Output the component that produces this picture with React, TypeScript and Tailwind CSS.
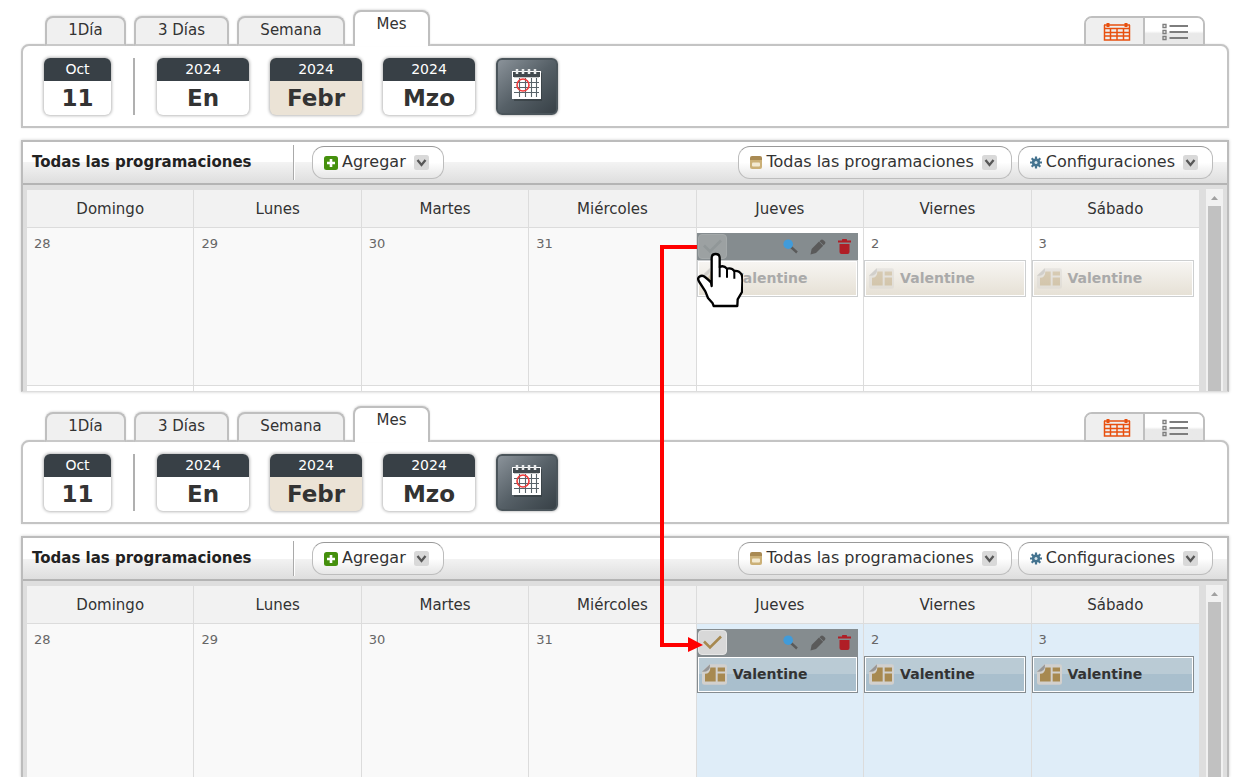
import React, { useState } from 'react';
import clsx from 'clsx';

const tabs = [
  { label: '1Día', width: 'w-[81px]' },
  { label: '3 Días', width: 'w-[95px]' },
  { label: 'Semana', width: 'w-[108px]' },
  { label: 'Mes', width: 'w-[77px]' },
];

const months = [
  { year: '2024', month: 'En' },
  { year: '2024', month: 'Febr', current: true },
  { year: '2024', month: 'Mzo' },
];

const weekDays = ['Domingo', 'Lunes', 'Martes', 'Miércoles', 'Jueves', 'Viernes', 'Sábado'];

interface Day {
  number: string;
  otherMonth?: boolean;
  active?: boolean;
  event?: string;
}

const week: Day[] = [
  { number: '28', otherMonth: true },
  { number: '29', otherMonth: true },
  { number: '30', otherMonth: true },
  { number: '31', otherMonth: true },
  { number: '1', active: true, event: 'Valentine' },
  { number: '2', event: 'Valentine' },
  { number: '3', event: 'Valentine' },
];

/* Icons */

function CalendarIcon() {
  return (
    <svg width="28" height="20" viewBox="0 0 28 20" fill="none" stroke="#e8500f" aria-hidden="true">
      <path d="M1.500 3v15h25V3M1 3h26M1 6.500h26M1 10.500h26M1 14h26M1 18h26M7.500 6v12M14 6v12M20.500 6v12" strokeWidth="1.500" />
      <path d="M5 1v4M23 1v4" strokeWidth="3" />
    </svg>
  );
}

function ListIcon() {
  return (
    <svg width="27" height="18" viewBox="0 0 27 18" fill="none" stroke="#7d7d7d" aria-hidden="true">
      <path d="M1 1.500h3v3H1zM1 7.500h3v3H1zM1 13.500h3v3H1z" strokeWidth="1.300" />
      <path d="M7.500 3H26M7.500 9H26M7.500 15H26" strokeWidth="2" />
    </svg>
  );
}

function MonthPickerIcon() {
  return (
    <svg width="32" height="34" viewBox="0 0 32 34" aria-hidden="true">
      <path d="M3 5h28v28H3z" fill="#30383c" opacity=".6" />
      <path d="M1 3h29v28H1z" fill="#fff" />
      <path d="M2 4h27v5H2z" fill="#41494e" />
      <path d="M3 9h25v1H3z" fill="#c9cccd" />
      <path d="M3 14.500h25M3 19.500h25M3 24.500h25M8.500 10v19M14.500 10v19M20.500 10v19M25.500 10v19" stroke="#59646a" strokeWidth="1.100" />
      <path d="M6 1v5M12 1v5M18 1v5M24 1v5" stroke="#e9ebec" strokeWidth="2.500" />
      <circle cx="12" cy="17" r="6" fill="none" stroke="#f13a3a" strokeWidth="1.600" />
    </svg>
  );
}

function PlusIcon() {
  return (
    <svg width="14" height="14" viewBox="0 0 14 14" aria-hidden="true">
      <rect width="14" height="14" rx="2.500" fill="#45900d" />
      <path d="M7 3v8M3 7h8" stroke="#fff" strokeWidth="2.600" />
    </svg>
  );
}

function BoxIcon() {
  return (
    <svg width="12" height="13" viewBox="0 0 12 13" aria-hidden="true">
      <path d="M0 3V2q0-2 2-2h8q2 0 2 2v2H0z" fill="#a98a53" />
      <path d="M0 4h12v7q0 2-2 2H2q-2 0-2-2z" fill="#cbb077" />
      <rect x="2" y="6.500" width="8" height="4" rx="1" fill="#f3ead2" />
    </svg>
  );
}

function GearIcon() {
  return (
    <svg width="12" height="13" viewBox="0 0 12 12" fill="none" stroke="#44738f" aria-hidden="true">
      <path d="M6 0v12M0 6h12M1.700 1.700l8.600 8.600M10.300 1.700l-8.600 8.600" strokeWidth="2.200" />
      <circle cx="6" cy="6" r="2.800" strokeWidth="2.600" />
      <circle cx="6" cy="6" r="1.500" fill="#d6e3ea" stroke="none" />
    </svg>
  );
}

function ChevronBox() {
  return (
    <svg width="15" height="15" viewBox="0 0 15 15" aria-hidden="true">
      <rect width="15" height="15" rx="2.500" fill="#d9d9d9" />
      <path d="M3.500 5l4 5 4-5" fill="none" stroke="#585858" strokeWidth="2.300" />
    </svg>
  );
}

function SearchIcon() {
  return (
    <svg width="15" height="15" viewBox="0 0 15 15" aria-hidden="true">
      <path d="M8 8l6 5.500" stroke="#5a5a5a" strokeWidth="2.400" />
      <circle cx="5.200" cy="5.200" r="4.800" fill="#419bd9" />
    </svg>
  );
}

function PencilIcon() {
  return (
    <svg width="16" height="16" viewBox="0 0 16 16" fill="#5a5a5a" aria-hidden="true">
      <path d="M.5 15.500L1.600 10 9 2.600l4.200 4.200L6 14z" />
      <path d="M9.500 2.200l1.300-1.300q1.200-1 2.400 0l1.700 1.700q1 1.200 0 2.400l-1.300 1.300z" />
    </svg>
  );
}

function TrashIcon() {
  return (
    <svg width="13" height="15" viewBox="0 0 13 15" fill="#b01e26" aria-hidden="true">
      <path d="M0 3.500V1.500h4V.700Q4 0 4.700 0h3.600Q9 0 9 .7v.8h4v2zM1.500 5h10v8q0 2-2 2h-6q-2 0-2-2z" />
    </svg>
  );
}

function LayoutIcon() {
  return (
    <svg width="25" height="21" viewBox="0 0 75 62" className="shrink-0" aria-hidden="true">
      <path d="M22 0h46q7 0 7 7v48q0 7-7 7H7q-7 0-7-7V22z" fill="#d2d0cd" />
      <path d="M9 52V29q16 0 16-19h16v42z" fill="#a78950" />
      <path d="M47 10h22v12H47zM47 28h22v24H47z" fill="#a78950" />
      <path d="M0 23L24 0q2 24-24 23z" fill="#969696" />
    </svg>
  );
}

function HandPointer() {
  return (
    <svg width="46" height="56" viewBox="0 0 138 168" className="pointer-events-none absolute left-0 top-6 z-20" aria-hidden="true">
      <path
        d="M44 102V18q0-12 12-12t12 12v27q12-6 22 5q14-4 22 7q14-2 22 11q3 8 2 26l-1 26-13 22-1 20H50l-3-8-14-16-8-20L7 90q-7-10 0-16 9-6 17 1 10 8 18 16z"
        fill="#fff"
        stroke="#000"
        strokeWidth="7"
        strokeLinejoin="round"
      />
      <path d="M68 44v32M90 49v28M112 56v24" stroke="#000" strokeWidth="6" />
    </svg>
  );
}

/* Links the first selection box to the one in the calendar below */
function LinkArrow() {
  return (
    <svg width="44" height="410" viewBox="0 0 44 410" className="pointer-events-none absolute -left-[37px] top-4 z-10" aria-hidden="true">
      <path d="M37 3H2v398h27" fill="none" stroke="#f00" strokeWidth="4" />
      <path d="M28 393l15 8-15 7z" fill="#f00" />
    </svg>
  );
}

/* Parts */

function DateCard({ top, bottom, width, current }: { top: string; bottom: string; width: string; current?: boolean }) {
  return (
    <button
      type="button"
      className={clsx(
        'flex h-[57px] flex-col overflow-hidden rounded-md text-center text-[#333] shadow-[0_0_3px_1px_#bbb]',
        width,
        current ? 'bg-[#ebe3d6]' : 'bg-white',
      )}
    >
      <span className="block h-[25px] w-full bg-[#384046] text-sm leading-[22px] text-white">{top}</span>
      <span className="block w-full text-[23px] font-bold leading-[34px]">{bottom}</span>
    </button>
  );
}

function MenuButton({ icon, label }: { icon: React.ReactNode; label: string }) {
  return (
    <button
      type="button"
      className="flex h-[33px] items-center rounded-xl border border-[#bdbdbd] border-t-[#999] bg-linear-to-b from-white from-50% to-[#e6e6e6] pl-[11px] pr-[14px] text-base leading-5 text-[#333]"
    >
      {icon}
      <span className="ml-1 mr-2 -mt-0.5">{label}</span>
      <ChevronBox />
    </button>
  );
}

function EventCard({ name, selected }: { name: string; selected: boolean }) {
  return (
    <div
      className={clsx(
        'mr-[5px] border bg-white p-px',
        selected ? 'border-[#858c90]' : 'border-[#cdcfd0]',
      )}
    >
      <div
        className={clsx(
          'flex h-[33px] items-center gap-[6px] pl-[3px]',
          selected
            ? 'bg-linear-to-b from-[#bacbd5] from-50% to-[#a9bfcd] to-50%'
            : 'bg-linear-to-b from-[#f7f5f2] to-[#e6e1d6]',
        )}
      >
        <span className={clsx('flex', !selected && 'opacity-35')}>
          <LayoutIcon />
        </span>
        <span className={clsx('pb-0.5 text-sm font-bold leading-5', selected ? 'text-[#333]' : 'text-[#aaa]')}>{name}</span>
      </div>
    </div>
  );
}

function ActionBar({ selected, onToggle }: { selected: boolean; onToggle: () => void }) {
  return (
    <div className="mr-[5px] flex h-[27px] items-center bg-[#858c8f] pl-px pr-[7px]">
      <button
        type="button"
        aria-label="Seleccionar"
        aria-pressed={selected}
        onClick={onToggle}
        className={clsx(
          'mr-auto flex h-[25px] w-[29px] items-center justify-center rounded border',
          selected ? 'border-[#e6e6e6] bg-[#d8d8d8]' : 'border-[#a4a9aa] bg-[#9ca1a2]',
        )}
      >
        <svg width="19" height="15" viewBox="0 0 19 15" fill="none" stroke={selected ? '#a78950' : '#919798'} aria-hidden="true">
          <path d="M1 6.500l6 6L18 1.500" strokeWidth="2.600" />
        </svg>
      </button>
      <div className="flex items-center gap-3">
        <button type="button" aria-label="Ver"><SearchIcon /></button>
        <button type="button" aria-label="Editar"><PencilIcon /></button>
        <button type="button" aria-label="Eliminar"><TrashIcon /></button>
      </div>
    </div>
  );
}

function Navigation() {
  const [active, setActive] = useState('Mes');

  return (
    <div>
      {/* View tabs */}
      <div className="relative -mb-0.5 flex h-9 items-end px-6">
        <div className="flex items-end gap-2">
          {tabs.map((tab) => (
            <button
              key={tab.label}
              type="button"
              onClick={() => setActive(tab.label)}
              className={clsx(
                'flex justify-center rounded-t-lg border-2 border-[#bfbfbf] pt-0.5 text-[15px] leading-5 text-[#333] shadow-[0_-1px_2px_#e4e4e4]',
                tab.width,
                tab.label === active ? 'h-9 border-b-0 bg-white' : 'h-[30px] border-b-[#c9c9c9] bg-[#f0f0f0]',
              )}
            >
              {tab.label}
            </button>
          ))}
        </div>
        <div className="ml-auto flex h-[30px] overflow-hidden rounded-t-lg border-2 border-[#bfbfbf]">
          <button type="button" aria-label="Calendario" className="flex w-[59px] items-center justify-center border-r-2 border-[#bfbfbf] bg-[#efefef] pl-1 pt-0.5">
            <CalendarIcon />
          </button>
          <button type="button" aria-label="Lista" className="flex w-[58px] items-center justify-center bg-linear-to-b from-white from-50% to-[#e9e9e9] to-60% pl-0.5 pt-0.5">
            <ListIcon />
          </button>
        </div>
      </div>

      {/* Date navigation */}
      <div className="flex items-start rounded-t-lg border-2 border-[#c4c4c4] bg-white pb-[11px] pl-[21px] pt-3 shadow-[0_0_2px_#ddd]">
        <DateCard top="Oct" bottom="11" width="w-[67px]" />
        <div className="mx-[22px] h-[57px] w-0.5 bg-[#b0b0b0]" />
        <div className="flex gap-[21px]">
          {months.map((m) => (
            <DateCard key={m.month} top={m.year} bottom={m.month} width="w-[92px]" current={m.current} />
          ))}
          <button
            type="button"
            aria-label="Elegir fecha"
            className="flex h-[57px] w-[62px] items-center justify-center rounded-md border-2 border-[#4b555b] bg-linear-to-br from-[#8b939a] via-[#566067] to-[#384147] pb-1 shadow-[0_0_3px_#999]"
          >
            <MonthPickerIcon />
          </button>
        </div>
      </div>
    </div>
  );
}

function Calendar({ initialSelected, cut }: { initialSelected: boolean; cut?: boolean }) {
  const [selected, setSelected] = useState(initialSelected);

  return (
    <div className={clsx('mt-3 border-2 border-[#bcbcbc] shadow-[0_0_3px_#ccc]', cut ? 'border-b-0' : 'border-b border-b-[#ddd]')}>
      {/* Toolbar */}
      <div className="flex h-[43px] items-center border-b-2 border-[#b4b4b4] bg-linear-to-b from-white from-50% via-[#f3f3f3] via-50% to-[#dedede] pl-[9px] pr-[14px]">
        <h2 className="w-[261px] text-[15px] font-bold text-[#222]">Todas las programaciones</h2>
        <div className="mr-[17px] h-[35px] w-0.5 border-r border-l border-l-[#aaa] border-r-white" />
        <MenuButton icon={<PlusIcon />} label="Agregar" />
        <div className="ml-auto flex gap-[6px]">
          <MenuButton icon={<BoxIcon />} label="Todas las programaciones" />
          <MenuButton icon={<GearIcon />} label="Configuraciones" />
        </div>
      </div>

      {/* Month grid */}
      <div className="flex bg-[#dedede] px-1 pt-1">
        <div className="mr-[7px] min-w-0 flex-1 pt-px">
          <table className="w-full table-fixed border-separate border-spacing-0 bg-white">
            <thead>
              <tr>
                {weekDays.map((day) => (
                  <th
                    key={day}
                    scope="col"
                    className="h-[38px] border-b border-r border-[#dcdcdc] bg-[#f2f2f2] p-0 text-[15px] font-normal leading-5 text-[#333] last:border-r-0"
                  >
                    {day}
                  </th>
                ))}
              </tr>
            </thead>
            <tbody>
              <tr>
                {week.map((day) => (
                  <td
                    key={day.number}
                    className={clsx(
                      'relative border-r border-[#dcdcdc] p-0 align-top last:border-r-0',
                      cut ? 'h-[153px]' : 'h-[158px] border-b',
                      day.otherMonth ? 'bg-[#f9f9f9]' : selected ? 'bg-[#dfedf8]' : 'bg-white',
                    )}
                  >
                    <div className="h-8 pt-[5px]">
                      {day.active ? (
                        <ActionBar selected={selected} onToggle={() => setSelected(!selected)} />
                      ) : (
                        <span className="block pl-[7px] text-[13px] leading-[22px] text-[#666]">{day.number}</span>
                      )}
                    </div>
                    {day.event && <EventCard name={day.event} selected={selected} />}
                    {day.active && !cut && (
                      <>
                        <LinkArrow />
                        <HandPointer />
                      </>
                    )}
                  </td>
                ))}
              </tr>
              {!cut && (
                <tr>
                  {week.map((day) => (
                    <td key={day.number} className="h-[5px] border-r border-[#dcdcdc] p-0 last:border-r-0" />
                  ))}
                </tr>
              )}
            </tbody>
          </table>
        </div>
        <div className="flex w-[17px] flex-col bg-[#f1f1f1]">
          <div className="flex h-[17px] items-center justify-center">
            <svg width="7" height="4" viewBox="0 0 7 4" aria-hidden="true">
              <path d="M0 4l3.500-4L7 4z" fill="#a0a0a0" />
            </svg>
          </div>
          <div className="mx-0.5 grow bg-[#c1c1c1]" />
        </div>
      </div>
    </div>
  );
}

export default function App() {
  return (
    <main className="flex flex-col gap-1 overflow-hidden bg-white px-[21px] font-['Verdana','DejaVu_Sans',sans-serif]">
      <section className="pt-[10px]">
        <Navigation />
        <Calendar initialSelected={false} />
      </section>
      <section className="pt-[10px]">
        <Navigation />
        <Calendar initialSelected cut />
      </section>
    </main>
  );
}
